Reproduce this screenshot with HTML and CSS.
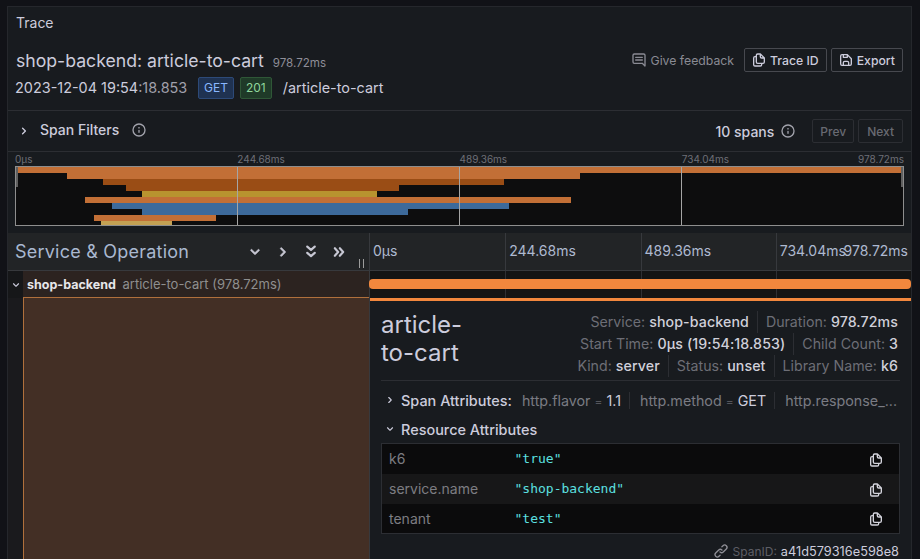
FILE: index.html
```html
<!DOCTYPE html>
<html lang="en">
<head>
  <meta charset="UTF-8">
  <meta name="viewport" content="width=device-width, initial-scale=1.0">
  <title>Trace</title>
  <link rel="stylesheet" href="styles.css">
</head>
<body>

  <svg class="sprite" aria-hidden="true">
    <symbol id="i-info" viewBox="0 0 24 24"><path d="M12,2A10,10,0,1,0,22,12,10,10,0,0,0,12,2Zm0,18a8,8,0,1,1,8-8A8,8,0,0,1,12,20Zm0-8.5a1,1,0,0,0-1,1v3a1,1,0,0,0,2,0v-3A1,1,0,0,0,12,11.5Zm0-4a1.25,1.25,0,1,0,1.25,1.25A1.25,1.25,0,0,0,12,7.5Z"/></symbol>
    <symbol id="i-copy" viewBox="0 0 24 24"><path d="M21,8.94a1.31,1.31,0,0,0-.06-.27l0-.09a1.07,1.07,0,0,0-.19-.28h0l-6-6h0a1.07,1.07,0,0,0-.28-.19.32.32,0,0,0-.09,0A.88.88,0,0,0,14.05,2H10A3,3,0,0,0,7,5V6H6A3,3,0,0,0,3,9V19a3,3,0,0,0,3,3h8a3,3,0,0,0,3-3V18h1a3,3,0,0,0,3-3V9S21,9,21,8.94ZM15,5.41,17.59,8H16a1,1,0,0,1-1-1ZM15,19a1,1,0,0,1-1,1H6a1,1,0,0,1-1-1V9A1,1,0,0,1,6,8H7v7a3,3,0,0,0,3,3h5Zm4-4a1,1,0,0,1-1,1H10a1,1,0,0,1-1-1V5a1,1,0,0,1,1-1h3V7a3,3,0,0,0,3,3h3Z"/></symbol>
    <symbol id="i-save" viewBox="0 0 24 24"><path d="M20.71,9.29l-6-6a1,1,0,0,0-.32-.21A1.09,1.09,0,0,0,14,3H6A3,3,0,0,0,3,6V18a3,3,0,0,0,3,3H18a3,3,0,0,0,3-3V10A1,1,0,0,0,20.71,9.29ZM9,5h4V7H9Zm6,14H9V16a1,1,0,0,1,1-1h4a1,1,0,0,1,1,1Zm4-1a1,1,0,0,1-1,1H17V16a3,3,0,0,0-3-3H10a3,3,0,0,0-3,3v3H6a1,1,0,0,1-1-1V6A1,1,0,0,1,6,5H7V8A1,1,0,0,0,8,9h6a1,1,0,0,0,1-1V6.41l4,4Z"/></symbol>
    <symbol id="i-comment" viewBox="0 0 24 24"><path d="M17,7H7A1,1,0,0,0,7,9H17a1,1,0,0,0,0-2Zm0,4H7a1,1,0,0,0,0,2H17a1,1,0,0,0,0-2Zm2-9H5A3,3,0,0,0,2,5V15a3,3,0,0,0,3,3H16.59l3.7,3.71A1,1,0,0,0,21,22a.84.84,0,0,0,.38-.08A1,1,0,0,0,22,21V5A3,3,0,0,0,19,2Zm1,16.59-2.29-2.3A1,1,0,0,0,17,16H5a1,1,0,0,1-1-1V5A1,1,0,0,1,5,4H19a1,1,0,0,1,1,1Z"/></symbol>
    <symbol id="i-link" viewBox="0 0 24 24"><path d="M10,17.55,8.23,19.27a2.47,2.47,0,0,1-3.5-3.5l4.54-4.55a2.46,2.46,0,0,1,3.39-.09l.12.1a1,1,0,0,0,1.4-1.43A2.75,2.75,0,0,0,14,9.59a4.46,4.46,0,0,0-6.09.22L3.31,14.36a4.48,4.48,0,0,0,6.33,6.33L11.37,19A1,1,0,0,0,10,17.55ZM20.69,3.31a4.49,4.49,0,0,0-6.33,0L12.63,5A1,1,0,0,0,14,6.45l1.73-1.72a2.47,2.47,0,0,1,3.5,3.5l-4.54,4.55a2.46,2.46,0,0,1-3.39.09l-.12-.1a1,1,0,0,0-1.4,1.43,2.75,2.75,0,0,0,.23.21,4.47,4.47,0,0,0,6.09-.22l4.55-4.55A4.49,4.49,0,0,0,20.69,3.31Z"/></symbol>
    <symbol id="i-right" viewBox="0 0 24 24"><path d="M14.83,11.29,10.59,7.05a1,1,0,0,0-1.42,0,1,1,0,0,0,0,1.41L12.71,12,9.17,15.54a1,1,0,0,0,0,1.41,1,1,0,0,0,.71.29,1,1,0,0,0,.71-.29l4.24-4.24A1,1,0,0,0,14.83,11.29Z"/></symbol>
    <symbol id="i-down" viewBox="0 0 24 24"><path d="M17,9.17a1,1,0,0,0-1.41,0L12,12.71,8.46,9.17a1,1,0,0,0-1.41,0,1,1,0,0,0,0,1.42l4.24,4.24a1,1,0,0,0,1.42,0L17,10.59A1,1,0,0,0,17,9.17Z"/></symbol>
    <symbol id="i-down2" viewBox="0 0 24 24"><path d="M7.5 5.5l4.5 4 4.5-4M7.5 13l4.5 4 4.5-4" fill="none" stroke="currentColor" stroke-width="2.6" stroke-linecap="round" stroke-linejoin="round"/></symbol>
    <symbol id="i-right2" viewBox="0 0 24 24"><path d="M7 7.5l4 4.5-4 4.5M13 7.5l4 4.5-4 4.5" fill="none" stroke="currentColor" stroke-width="2.6" stroke-linecap="round" stroke-linejoin="round"/></symbol>
  </svg>

  <div class="panel">
    <div class="panel-title">Trace</div>

    <header class="trace-head">
      <div class="head-top">
        <h1>shop-backend: article-to-cart <small>978.72ms</small></h1>
        <div class="actions">
          <span class="feedback"><svg class="ic16"><use href="#i-comment"/></svg>Give feedback</span>
          <button class="btn"><svg class="ic16"><use href="#i-copy"/></svg>Trace ID</button>
          <button class="btn"><svg class="ic16"><use href="#i-save"/></svg>Export</button>
        </div>
      </div>
      <div class="head-sub">
        <span class="stamp">2023-12-04 19:54<span class="dim">:18.853</span></span>
        <span class="tag tag-blue">GET</span>
        <span class="tag tag-green">201</span>
        <span class="route">/article-to-cart</span>
      </div>
    </header>

    <div class="filters">
      <svg class="ic16 chev"><use href="#i-right"/></svg>
      <span class="filters-label">Span Filters</span>
      <svg class="ic16 info"><use href="#i-info"/></svg>
      <span class="spans">10 spans</span>
      <svg class="ic16 info"><use href="#i-info"/></svg>
      <button class="btn btn-off btn-prev">Prev</button>
      <button class="btn btn-off">Next</button>
    </div>

    <div class="mini">
      <div class="mini-labels">
        <span>0µs</span><span>244.68ms</span><span>489.36ms</span><span>734.04ms</span>
        <span class="mini-end">978.72ms</span>
      </div>
      <svg class="mini-canvas" viewBox="0 0 889 60" width="889" height="60">
        <rect width="889" height="60" fill="#0d0d0e"/>
        <rect x="2" y="1" width="886" height="6" fill="#c26f36"/>
        <rect x="52" y="7" width="513" height="6" fill="#c26f36"/>
        <rect x="88" y="13" width="401" height="6" fill="#9a4d15"/>
        <rect x="111" y="19" width="273" height="6" fill="#9a4d15"/>
        <rect x="127" y="25" width="235" height="6" fill="#b8932f"/>
        <rect x="70" y="31" width="486" height="6" fill="#c26f36"/>
        <rect x="97" y="37" width="397" height="6" fill="#3d6a9b"/>
        <rect x="127" y="43" width="266" height="6" fill="#3d6a9b"/>
        <rect x="79" y="49" width="122" height="6" fill="#c26f36"/>
        <rect x="86" y="55" width="71" height="4" fill="#c3a153"/>
        <path d="M222.5 1V59M444.5 1V59M666.5 1V59" stroke="#a5a5a5"/>
        <rect x=".5" y=".5" width="888" height="59" fill="none" stroke="#8e8e8e"/>
        <rect x="1" y="1" width="2" height="20" fill="#5f5f5f"/>
        <rect x="886" y="1" width="2" height="20" fill="#5f5f5f"/>
      </svg>
    </div>

    <div class="view">
      <div class="view-head">
        <div class="col-name">
          <span class="col-title">Service &amp; Operation</span>
          <span class="col-tools">
            <svg class="ic20"><use href="#i-down"/></svg>
            <svg class="ic20"><use href="#i-right"/></svg>
            <svg class="ic20"><use href="#i-down2"/></svg>
            <svg class="ic20"><use href="#i-right2"/></svg>
          </span>
          <i class="col-grip"></i>
        </div>
        <div class="ticks">
          <span>0µs</span><span>244.68ms</span><span>489.36ms</span><span>734.04ms</span>
          <span class="tick-end">978.72ms</span>
        </div>
      </div>

      <div class="span-row">
        <div class="span-name">
          <span class="span-toggle"><svg class="ic14"><use href="#i-down"/></svg></span>
          <span class="span-label"><b>shop-backend</b> <span>article-to-cart (978.72ms)</span></span>
        </div>
        <div class="span-bar">
          <i></i><i></i><i></i><i></i>
          <div class="bar"></div>
        </div>
      </div>

      <div class="detail-row">
        <div class="detail-left">
          <div class="detail-fill"></div>
        </div>
        <div class="detail">
          <div class="detail-head">
            <h2>article-<br>to-cart</h2>
            <div class="overview">
              <div><span>Service: <b>shop-backend</b></span><span>Duration: <b>978.72ms</b></span></div>
              <div><span>Start Time: <b>0µs (19:54:18.853)</b></span><span>Child Count: <b>3</b></span></div>
              <div><span>Kind: <b>server</b></span><span>Status: <b>unset</b></span><span>Library Name: <b>k6</b></span></div>
            </div>
          </div>

          <div class="attr-line">
            <svg class="ic14"><use href="#i-right"/></svg>
            <strong>Span Attributes:</strong>
            <div class="attr-preview">
              <span>http.flavor <em>=</em> <b>1.1</b></span><span>http.method <em>=</em> <b>GET</b></span><span>http.response_...</span>
            </div>
          </div>

          <div class="attr-line attr-open">
            <svg class="ic14"><use href="#i-down"/></svg>
            <strong>Resource Attributes</strong>
          </div>

          <table class="kv">
            <tr><td class="k">k6</td><td class="v">"true"</td><td class="c"><svg class="ic16"><use href="#i-copy"/></svg></td></tr>
            <tr><td class="k">service.name</td><td class="v">"shop-backend"</td><td class="c"><svg class="ic16"><use href="#i-copy"/></svg></td></tr>
            <tr><td class="k">tenant</td><td class="v">"test"</td><td class="c"><svg class="ic16"><use href="#i-copy"/></svg></td></tr>
          </table>

          <div class="span-id"><svg class="ic16"><use href="#i-link"/></svg><span>SpanID:</span> <b>a41d579316e598e8</b></div>
        </div>
      </div>
    </div>
  </div>

</body>
</html>
```

FILE: styles.css
```css
*{box-sizing:border-box}
html,body{height:100%}
body{
  margin:0;background:#111217;color:#ccccdc;overflow:hidden;
  font-family:Inter,"Open Sans",sans-serif;font-size:14px;
}
.sprite{display:none}
svg{fill:currentColor;flex:none}
.ic14{width:14px;height:14px}
.ic16{width:16px;height:16px}
.ic20{width:20px;height:20px}

.panel{
  margin:6px 8px 0 7px;height:553px;background:#181b1f;
  border:1px solid #25272c;border-bottom:0;overflow:hidden;
}
.panel-title{height:31px;padding:8px 8px 0;line-height:16px;font-size:14px}

.trace-head{height:73px;padding:4px 8px 0;border-bottom:1px solid #2c2e33}
.head-top{display:flex;justify-content:space-between;align-items:center;height:36px}
h1{margin:0;padding-top:4px;font-size:17.65px;font-weight:400;line-height:24px;color:#ccccdc}
h1 small{font-size:11.6px;color:#8e8e98;margin-left:4px}
.actions{display:flex;align-items:center;gap:4px}
.feedback{display:flex;align-items:center;gap:4px;font-size:12.25px;color:#8a8b94;margin-right:6px}
.btn{
  display:inline-flex;align-items:center;gap:3px;height:24px;padding:0 7px 0 6px;
  background:none;border:1px solid #47494f;border-radius:2px;
  font:500 12.25px Inter,sans-serif;color:#ccccdc;
}
.head-sub{display:flex;align-items:center;height:24px;margin-top:-3px;font-size:14.45px;margin-left:-1px}
.stamp{width:183px}
.dim{color:#a0a0ab}
.tag{
  height:22px;line-height:20px;padding:0 5px;border-radius:2px;
  border:1px solid;font-size:12px;margin:2px 6px 0 0;
}
.tag-blue{background:#1f3251;border-color:#2d4a78;color:#8ab8ff}
.tag-green{background:#1f3a28;border-color:#2f5737;color:#8fd69b}
.route{margin-left:5px}

.filters{
  display:flex;align-items:center;height:41px;padding:0 8px;
  border-bottom:1px solid #2c2e33;
}
.chev{margin-right:8px}
.filters-label{font-weight:500;font-size:14px;margin:-3px 12px 0 0}
.filters .info{color:#a2a3ac}
.filters .info:nth-of-type(2){margin-top:-3px}
.spans{margin-left:auto;margin-right:6px;font-weight:500;font-size:14px}
.btn-off{color:#686a72;border-color:#2c2e33;padding:0 8px;font-size:12px}
.btn-prev{margin-left:16px;margin-right:4px;padding:0 7px}

.mini{height:81px;padding:0 7px;background:#181b1f}
.mini-labels{position:relative;display:grid;grid-template-columns:repeat(4,1fr);width:889px;height:14px;font-size:10px;line-height:14px;color:#6e6f77}
.mini-end{position:absolute;right:0;top:0}
.mini-canvas{display:block}

.view{background:#141414}
.view-head{display:flex;height:38px;background:#222426;border-bottom:1px solid #37393d}
.col-name{position:relative;display:flex;align-items:center;width:362px;padding:0 7px;border-right:1px solid #37393d}
.col-title{font-size:18px;letter-spacing:.22px;color:#a9b8d0;line-height:24px}
.col-tools{display:flex;align-items:center;gap:8px;margin-left:auto;margin-right:13px;color:#c7c7d3;stroke:currentColor;stroke-width:.7}
.col-grip{position:absolute;right:5px;bottom:2px;width:5px;height:9px;border:solid #9c9c9c;border-width:0 1px}
.ticks{position:relative;flex:1;display:grid;grid-template-columns:repeat(4,1fr);color:#aeb9d0;font-size:14px;line-height:36px}
.ticks span{padding-left:3px;border-left:1px solid #37393d}
.ticks span:first-child{border-left:0}
.ticks .tick-end{position:absolute;right:3px;top:0;padding:0;border:0}

.span-row{display:flex;height:27px}
.span-name{display:flex;width:362px;border-right:1px solid #37393d;background:#161719}
.span-toggle{display:flex;align-items:center;justify-content:center;width:15px;color:#ccccdc}
.span-label{flex:1;background:#2c2320;line-height:27px;font-size:13px;padding-left:4px;color:#8f8f8f;border-bottom:1px solid #b0703c}
.span-label b{color:#e6e6ea;font-size:12.5px;font-weight:700;margin-right:3px}
.span-bar{position:relative;flex:1;display:grid;grid-template-columns:repeat(4,1fr)}
.span-bar i{border-left:1px solid #2f2f33}
.span-bar i:first-child{border-left:0}
.bar{position:absolute;left:-1px;right:0;top:8px;height:10px;background:#f2873d;border-radius:4px}

.detail-row{display:flex;height:262px}
.detail-left{width:362px;padding-left:15px;border-right:1px solid #37393d;background:#1a1a1d}
.detail-fill{height:100%;background:#432f25;border-left:1px solid #b0703c}
.detail{flex:1;padding:0 11px;background:#181b1f;border-top:3px solid #f2873d}
.detail-head{display:flex;justify-content:space-between;height:80px;border-bottom:1px solid #2c2e33;padding-top:10px}
h2{margin:0;font-size:24px;font-weight:400;line-height:28px;color:#ccccdc}
.overview{text-align:right;color:#6d6e76;line-height:22px;padding-right:2px;font-size:14.2px}
.overview span{display:inline-block;line-height:22px}
.overview span+span{margin-left:8px;padding-left:8px;border-left:1px solid #2c2e33}
.overview b{font-weight:500;letter-spacing:.1px;color:#d0d0da}

.attr-line{display:flex;align-items:center;height:38px;padding-left:2px;white-space:nowrap;overflow:hidden}
.attr-line strong{font-weight:500;font-size:14.45px;margin:0 10px 0 4px;color:#ccccdc}
.attr-open{height:20px}
.attr-preview{display:flex;color:#7a7b83;font-size:14.3px}
.attr-preview span+span{margin-left:8px;padding-left:10px;border-left:1px solid #2c2e33}
.attr-preview b{font-weight:400;color:#ccccdc}
.attr-preview em{font-style:normal;font-size:12px;color:#55565c}

.kv{width:100%;margin-top:4px;border-collapse:collapse;border:1px solid #2c2e33;table-layout:fixed}
.kv td{height:30px;padding:0 8px;background:#0b0b0c}
.kv tr:nth-child(2) td{background:#171718}
.kv .k{width:125px;padding-left:7px;color:#7d7d82}
.kv .v{font:13px "DejaVu Sans Mono",monospace;color:#5ce0e0}
.kv .c{width:46px;color:#d4d4dc;padding:0 15px 0 0;text-align:right}
.kv .c svg{display:inline-block;vertical-align:middle}

.span-id{display:flex;align-items:center;justify-content:flex-end;gap:4px;margin-top:9px;padding-right:1px;font-size:12px;color:#5d5e65}
.span-id svg{color:#8f8f96}
.span-id b{font-weight:400;font-size:12.75px;color:#ccccdc}
```
